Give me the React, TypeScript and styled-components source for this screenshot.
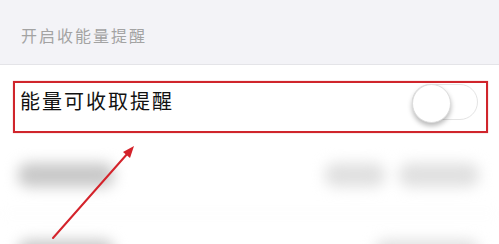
import styled, { createGlobalStyle } from "styled-components"

const GlobalStyle = createGlobalStyle`
  html, body {
    margin: 0;
    padding: 0;
    background: #ffffff;
    font-family: "Noto Sans CJK SC", "Noto Sans", sans-serif;
  }
`

function Toggle ({ on }: { on: boolean }): JSX.Element {
  return (
    <Track on={on}>
      <Knob on={on} />
    </Track>
  )
}

function Arrow (): JSX.Element {
  return (
    <ArrowLayer width="499" height="244" viewBox="0 0 499 244">
      <line x1="53" y1="238" x2="128" y2="153" stroke="#d4232b" strokeWidth="2" strokeLinecap="round" />
      <polygon points="134,146 123,152 130,158" fill="#d4232b" />
    </ArrowLayer>
  )
}

const rows = [
  { left: 96, right: [60, 80] },
  { left: 96, right: [104] }
]

function App (): JSX.Element {
  return (
    <Page>
      <GlobalStyle />
      <SectionHeader>开启收能量提醒</SectionHeader>
      <Highlight>
        <RowLabel>能量可收取提醒</RowLabel>
        <Toggle on={false} />
      </Highlight>
      <BlurredList>
        {rows.map((row, i) => (
          <ListRow key={i} last={i === rows.length - 1}>
            <Blob width={row.left} tone="#c8c8c8" />
            <RightGroup>
              {row.right.map((w, j) => (
                <Blob key={j} width={w} tone="#e0e0e0" />
              ))}
            </RightGroup>
          </ListRow>
        ))}
      </BlurredList>
      <Arrow />
    </Page>
  )
}

export default App

const Page = styled.div`
  position: relative;
  width: 499px;
  height: 244px;
  overflow: hidden;
  background: #ffffff;
`

const SectionHeader = styled.div`
  height: 65px;
  box-sizing: border-box;
  padding: 24px 0 0 21px;
  background: #f3f3f7;
  border-bottom: 1px solid #e4e4e8;
  color: #a3a3a3;
  font-size: 16px;
  letter-spacing: 2px;
  line-height: 22px;
`

const Highlight = styled.div`
  display: flex;
  align-items: center;
  justify-content: space-between;
  margin: 16px 11px 0 13px;
  padding: 1px 8px 11px 5px;
  border: 2px solid #d0252c;
  box-shadow: 0 0 1px rgba(208, 37, 44, 0.5);
`

const RowLabel = styled.span`
  color: #111111;
  font-size: 20px;
  letter-spacing: 2px;
  line-height: 28px;
  margin-top: -3px;
`

const Track = styled.div<{ on: boolean }>`
  position: relative;
  width: 66px;
  height: 36px;
  box-sizing: border-box;
  border-radius: 18px;
  border: 1.5px solid #e4e4e4;
  background: ${(props) => (props.on ? "#4cd964" : "#ffffff")};
`

const Knob = styled.div<{ on: boolean }>`
  position: absolute;
  top: -1px;
  left: ${(props) => (props.on ? "29px" : "-1px")};
  width: 37px;
  height: 37px;
  border-radius: 50%;
  background: #ffffff;
  border: 0.5px solid #dddddd;
  box-shadow: 0 3px 5px rgba(0, 0, 0, 0.28);
`

const BlurredList = styled.div`
  padding-top: 4px;
  filter: blur(7px);
`

const ListRow = styled.div<{ last: boolean }>`
  display: flex;
  align-items: center;
  justify-content: space-between;
  height: 76px;
  padding: 0 20px 0 18px;
  border-bottom: ${(props) => (props.last ? "none" : "1px solid #f2f2f2")};
`

const RightGroup = styled.div`
  display: flex;
  gap: 14px;
`

const Blob = styled.div<{ width: number; tone: string }>`
  width: ${(props) => props.width}px;
  height: 24px;
  border-radius: 10px;
  background: ${(props) => props.tone};
`

const ArrowLayer = styled.svg`
  position: absolute;
  top: 0;
  left: 0;
  pointer-events: none;
`
